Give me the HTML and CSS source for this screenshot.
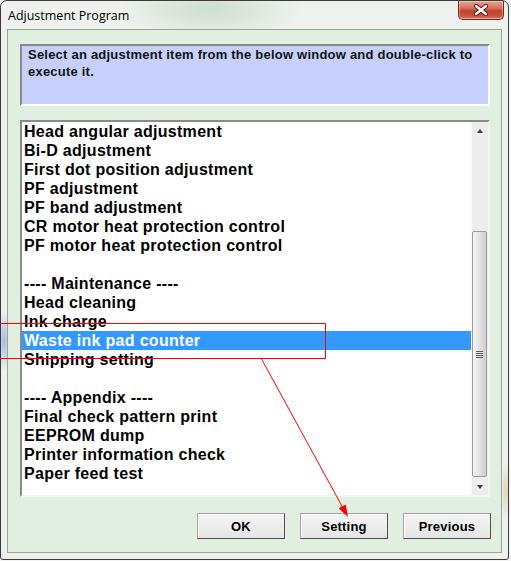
FILE: index.html
```html
<!doctype html>
<html lang="en">

<head>
  <meta charset="utf-8">
  <meta name="viewport" content="width=device-width, initial-scale=1">
  <link rel="stylesheet" href="styles.css">
  <title>Adjustment Program</title>
</head>

<body>
  <div class="window">
    <div class="titlebar">
      <span class="title">Adjustment Program</span>
      <button class="close" title="Close">
        <svg viewBox="0 0 16 12" width="16" height="12">
          <path d="M3 2 L13 10 M13 2 L3 10" stroke="#5a1c14" stroke-width="4.2" stroke-linecap="round" />
          <path d="M3 2 L13 10 M13 2 L3 10" stroke="#fff" stroke-width="2.4" stroke-linecap="round" />
        </svg>
      </button>
    </div>

    <div class="client">
      <div class="hint">Select an adjustment item from the below window and double-click to execute it.</div>

      <div class="listbox">
        <ul class="items">
          <li>Head angular adjustment</li>
          <li>Bi-D adjustment</li>
          <li>First dot position adjustment</li>
          <li>PF adjustment</li>
          <li>PF band adjustment</li>
          <li>CR motor heat protection control</li>
          <li>PF motor heat protection control</li>
          <li></li>
          <li>---- Maintenance ----</li>
          <li>Head cleaning</li>
          <li>Ink charge</li>
          <li class="selected">Waste ink pad counter</li>
          <li>Shipping setting</li>
          <li></li>
          <li>---- Appendix ----</li>
          <li>Final check pattern print</li>
          <li>EEPROM dump</li>
          <li>Printer information check</li>
          <li>Paper feed test</li>
        </ul>
        <div class="scrollbar">
          <div class="arrow up"></div>
          <div class="track">
            <div class="thumb"><span class="grip"></span></div>
          </div>
          <div class="arrow down"></div>
        </div>
      </div>

      <div class="buttons">
        <button class="btn">OK</button>
        <button class="btn">Setting</button>
        <button class="btn">Previous</button>
      </div>
    </div>
  </div>

  <!-- red markup drawn over the dialog -->
  <svg class="markup" width="511" height="561" viewBox="0 0 511 561">
    <path d="M-4 323.5 H325.5 V358.5 H-4" fill="none" stroke="#f00" stroke-width="1" />
    <path d="M261 358 L343 508" fill="none" stroke="#f00" stroke-width="1" />
    <polygon points="348,517 345.7,504.4 338.6,508.3" fill="#f00" />
  </svg>
</body>

</html>
```

FILE: styles.css
```css
body {
  margin: 0;
  background-color: #f3f4f3;
  font-family: "Liberation Sans", Arial, sans-serif;
  color: #000;
}

.window {
  box-sizing: border-box;
  width: 509px;
  height: 560px;
  padding: 0 6px 6px 6px;
  border: 1px solid #3b3b3b;
  border-radius: 7px 7px 3px 3px;
  background:
    radial-gradient(ellipse 90px 30px at 210px 8px, rgba(190, 215, 190, 0.7), transparent),
    radial-gradient(ellipse 8px 30px at 3px 340px, rgba(120, 150, 220, 0.6), transparent),
    radial-gradient(ellipse 6px 30px at 505px 490px, rgba(215, 195, 140, 0.6), transparent),
    #eef1ee;
  display: flex;
  flex-direction: column;
}

.titlebar {
  height: 28px;
  display: flex;
  justify-content: space-between;
  align-items: flex-start;
  margin: 0 -2px 0 1px;
}

.title {
  font-family: "Open Sans", "Noto Sans", sans-serif;
  font-size: 12.5px;
  line-height: 16px;
  margin-top: 7px;
  color: #000;
}

.close {
  width: 46px;
  height: 19px;
  padding: 0;
  border: 1px solid #6e2b22;
  border-top: none;
  border-radius: 0 0 5px 5px;
  background: linear-gradient(to bottom, #e6a596 0%, #d5705e 40%, #c2402b 55%, #c9543e 85%, #e08a72 100%);
  box-shadow: inset 0 0 0 1px rgba(255, 255, 255, 0.35);
  display: flex;
  align-items: center;
  justify-content: center;
}

.client {
  flex: 1;
  background-color: #e1efe1;
  border: 1px solid #9aa39a;
  padding: 14px 10px 0 12px;
}

.hint {
  box-sizing: border-box;
  width: 470px;
  height: 62px;
  padding: 0 6px;
  background-color: #c6d0fb;
  border: 2px solid;
  border-color: #8a8a8a #ffffff #ffffff #8a8a8a;
  font-size: 13px;
  font-weight: bold;
  line-height: 17px;
  letter-spacing: 0.22px;
  color: #111;
}

.listbox {
  box-sizing: border-box;
  width: 470px;
  height: 377px;
  margin-top: 14px;
  border: 2px solid;
  border-color: #8a8a8a #f4f4f4 #f4f4f4 #8a8a8a;
  background-color: #fff;
  display: flex;
}

.items {
  flex: 1;
  list-style: none;
  margin: 0;
  padding: 0;
  font-size: 16px;
  font-weight: bold;
  letter-spacing: 0.3px;
}

.items li {
  height: 19px;
  line-height: 19px;
  padding-left: 2px;
  white-space: nowrap;
}

.items li.selected {
  background-color: #3399ff;
  color: #fff;
}

.scrollbar {
  width: 16px;
  display: flex;
  flex-direction: column;
  background-color: #ededed;
  border-left: 1px solid #f7f7f7;
}

.arrow {
  height: 17px;
  display: flex;
  align-items: center;
  justify-content: center;
}

.arrow::before {
  content: "";
  border-left: 3px solid transparent;
  border-right: 3px solid transparent;
}

.arrow.up::before {
  border-bottom: 4px solid #3c3c3c;
}

.arrow.down::before {
  border-top: 4px solid #3c3c3c;
}

.track {
  flex: 1;
  display: flex;
  flex-direction: column;
  justify-content: flex-end;
  padding-bottom: 1px;
}

.thumb {
  box-sizing: border-box;
  height: 246px;
  margin: 0 1px 0 0;
  border: 1px solid #9b9b9b;
  border-radius: 2px;
  background: linear-gradient(to right, #f6f6f6, #e2e2e2 50%, #cfcfcf);
  display: flex;
  align-items: center;
  justify-content: center;
}

.grip {
  width: 7px;
  height: 7px;
  background: repeating-linear-gradient(to bottom, #5a5a5a 0, #5a5a5a 1px, #e8e8e8 1px, #e8e8e8 2px);
}

.buttons {
  display: flex;
  justify-content: flex-end;
  gap: 15px;
  margin-top: 16px;
}

.btn {
  box-sizing: border-box;
  width: 88px;
  height: 26px;
  padding: 0;
  border: 1px solid;
  border-color: #a4a4a4 #505050 #505050 #a4a4a4;
  background: linear-gradient(to bottom, #f5f5f5, #e5e5e5);
  box-shadow: inset 1px 1px 0 #fff;
  font-family: "Liberation Sans", Arial, sans-serif;
  font-size: 13px;
  font-weight: bold;
  letter-spacing: 0.2px;
  color: #000;
}

.markup {
  position: absolute;
  top: 0;
  left: 0;
  pointer-events: none;
}
```
